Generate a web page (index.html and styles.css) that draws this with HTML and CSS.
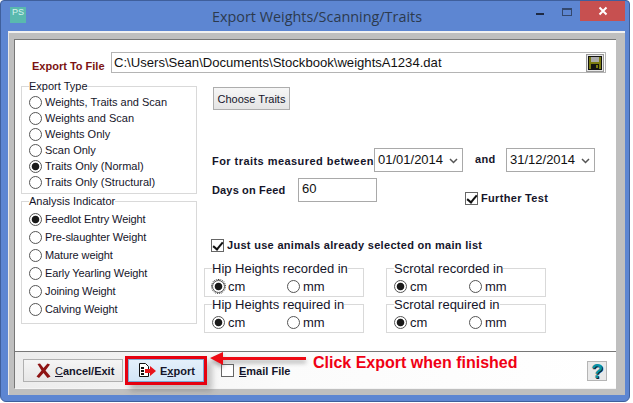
FILE: index.html
```html
<!DOCTYPE html>
<html lang="en">
<head>
<meta charset="utf-8">
<title>Export Weights/Scanning/Traits</title>
<link rel="stylesheet" href="styles.css">
</head>
<body>
<div class="window">
  <header class="titlebar">
    <div class="app-logo"><span class="app-logo-text">PS</span></div>
    <div class="title">Export Weights/Scanning/Traits</div>
    <div class="win-min"></div>
    <div class="win-max"></div>
    <div class="win-close">
      <svg width="10" height="10" viewBox="0 0 10 10"><path d="M1.5 1.5l7 7M8.500 1.500l-7 7" stroke="#fff" stroke-width="2"/></svg>
    </div>
  </header>
  <div class="frame">
    <main class="content">
      <div class="file-row">
        <label class="file-label">Export To File</label>
        <div class="file-box">
          <span class="file-path">C:\Users\Sean\Documents\Stockbook\weightsA1234.dat</span>
          <span class="save-btn">
            <svg width="14" height="14" viewBox="0 0 14 14">
              <rect width="14" height="14" fill="#111"/>
              <rect x="1" y="1" width="12" height="12" fill="#7a7a10"/>
              <rect x="3" y="1" width="8" height="5" fill="#a9a9a9"/>
              <rect x="3" y="8" width="8" height="5" fill="#111"/>
              <rect x="8" y="9" width="2" height="3" fill="#7a7a10"/>
            </svg>
          </span>
        </div>
      </div>
      <div class="columns">
        <div class="left-col">
          <fieldset class="group type-group">
            <legend>Export Type</legend>
            <label class="opt"><input type="radio" name="t">Weights, Traits and Scan</label>
            <label class="opt"><input type="radio" name="t">Weights and Scan</label>
            <label class="opt"><input type="radio" name="t">Weights Only</label>
            <label class="opt"><input type="radio" name="t">Scan Only</label>
            <label class="opt"><input type="radio" name="t" checked>Traits Only (Normal)</label>
            <label class="opt"><input type="radio" name="t">Traits Only (Structural)</label>
          </fieldset>
          <fieldset class="group analysis-group">
            <legend>Analysis Indicator</legend>
            <label class="opt"><input type="radio" name="a" checked>Feedlot Entry Weight</label>
            <label class="opt"><input type="radio" name="a">Pre-slaughter Weight</label>
            <label class="opt"><input type="radio" name="a">Mature weight</label>
            <label class="opt"><input type="radio" name="a">Early Yearling Weight</label>
            <label class="opt"><input type="radio" name="a">Joining Weight</label>
            <label class="opt"><input type="radio" name="a">Calving Weight</label>
          </fieldset>
        </div>
        <div class="right-col">
          <button class="choose-btn" type="button">Choose Traits</button>
          <div class="date-row">
            <span class="bold-label between">For traits measured between</span>
            <div class="date-box"><span>01/01/2014</span><svg class="chev" width="9" height="6" viewBox="0 0 9 6"><path d="M1 1l3.500 3.500L8 1" fill="none" stroke="#555" stroke-width="1.500"/></svg></div>
            <span class="bold-label and">and</span>
            <div class="date-box"><span>31/12/2014</span><svg class="chev" width="9" height="6" viewBox="0 0 9 6"><path d="M1 1l3.500 3.500L8 1" fill="none" stroke="#555" stroke-width="1.500"/></svg></div>
          </div>
          <div class="days-row">
            <span class="bold-label days">Days on Feed</span>
            <div class="days-box">60</div>
            <label class="check bold-label further"><input type="checkbox" checked>Further Test</label>
          </div>
          <label class="check bold-label just"><input type="checkbox" checked>Just use animals already selected on main list</label>
          <div class="units">
            <fieldset class="unit">
              <legend>Hip Heights recorded in</legend>
              <label class="unit-opt"><input class="focused" type="radio" name="u1" checked>cm</label>
              <label class="unit-opt"><input type="radio" name="u1">mm</label>
            </fieldset>
            <fieldset class="unit">
              <legend>Scrotal recorded in</legend>
              <label class="unit-opt"><input type="radio" name="u2" checked>cm</label>
              <label class="unit-opt"><input type="radio" name="u2">mm</label>
            </fieldset>
            <fieldset class="unit">
              <legend>Hip Heights required in</legend>
              <label class="unit-opt"><input type="radio" name="u3" checked>cm</label>
              <label class="unit-opt"><input type="radio" name="u3">mm</label>
            </fieldset>
            <fieldset class="unit">
              <legend>Scrotal required in</legend>
              <label class="unit-opt"><input type="radio" name="u4" checked>cm</label>
              <label class="unit-opt"><input type="radio" name="u4">mm</label>
            </fieldset>
          </div>
        </div>
      </div>
    </main>
    <footer class="footer">
      <button class="cancel-btn" type="button">
        <svg width="15" height="15" viewBox="0 0 15 15"><path d="M1.500 1L4 .5 7.500 5 11.500 .5 14 1.500 9.500 7.500 14.500 13.500 11.500 15 7.500 10 3 15 .5 13.500 5.500 7.500z" fill="#8e1414"/></svg>
        <span><u>C</u>ancel/Exit</span>
      </button>
      <button class="export-btn" type="button">
        <svg width="17" height="15" viewBox="0 0 17 15">
          <path d="M.5.500h6l3 3v10h-9z" fill="#fff" stroke="#111"/>
          <path d="M2 4h3v2H2zM2 7h3v2H2zM2 10h3v2H2z" fill="#111"/>
          <path d="M6 6h5V3l6 5-6 5v-3H6z" fill="#e8141c"/>
        </svg>
        <span>E<u>x</u>port</span>
      </button>
      <label class="email"><input type="checkbox"><span><u>E</u>mail File</span></label>
      <span class="callout">Click Export when finished</span>
      <button class="help-btn" type="button">?</button>
      <svg class="arrow" width="100" height="16" viewBox="0 0 100 16">
        <path d="M0 7l13-6v5h83v3H13v5z" fill="#ee0a14"/>
      </svg>
    </footer>
  </div>
</div>
</body>
</html>
```
FILE: styles.css
```css
* { box-sizing: border-box; }
html, body { margin: 0; padding: 0; background: #fff; }
body { width: 633px; height: 403px; overflow: hidden; font-family: "Liberation Sans", Arial, sans-serif; }

.window {
  width: 630px;
  height: 402px;
  background: #5d86d2;
  border: 1px solid #3f5f9c;
  border-radius: 4px 4px 6px 6px;
  padding: 0 4px 0 7px;
  display: flex;
  flex-direction: column;
}

.titlebar { height: 30px; display: flex; align-items: flex-start; flex: none; }
.app-logo {
  width: 16px; height: 16px; margin: 6px 0 0 2px;
  background: #59b9ae; display: flex; justify-content: center;
  flex: none;
}
.app-logo-text { color: #d8f2ee; font-size: 9px; line-height: 11px; }
.title {
  width: 0; flex: 1 1 auto;
  text-align: center; color: #2c3a4e; font-family: "Open Sans", sans-serif;
  font-size: 14.400px; line-height: 20px; margin-top: 6px; padding-left: 72px;
}
.win-min { width: 8px; height: 2px; background: #1e2a44; margin: 12px 18px 0 0; flex: none; }
.win-max { width: 10px; height: 8px; border: 1px solid #33486e; border-top-width: 2px; margin: 7px 8px 0 0; flex: none; }
.win-close {
  width: 45px; height: 20px; background: #c75050; flex: none; margin-right: 0;
  display: flex; align-items: center; justify-content: center;
}

.frame {
  height: 364px; flex: none;
  border-top: 2px solid #f1f1f1;
  border-left: 1px solid #e8e8e8;
  background: #bfbfbf;
  padding: 6px 9px 6px 5px;
  display: flex; flex-direction: column;
}

.content {
  flex: 1 1 auto; min-height: 0;
  background: #fff;
  border-top: 1px solid #777;
  border-left: 1px solid #777;
  padding: 12px 0 0 16px;
}

.file-row { display: flex; align-items: flex-start; }
.file-label { width: 80px; flex: none; color: #7b1212; font-size: 11px; font-weight: bold; letter-spacing: 0; margin-top: 8px; padding-left: 1px; }
.file-box {
  width: 495px; height: 21px; flex: none;
  border: 1px solid #b4b4b4; padding-left: 2px;
  display: flex; align-items: center; justify-content: space-between;
  font-size: 13.100px; color: #111;
}
.save-btn { width: 18px; height: 18px; border: 1px solid #999; background: #e6e6e6; display: flex; align-items: center; justify-content: center; margin-right: 1px; }

.columns { display: flex; margin-top: 6px; margin-left: -10px; }
.left-col { width: 176px; flex: none; }
.right-col { margin-left: 14px; width: 340px; flex: none; display: flex; flex-direction: column; align-items: flex-start; }

.group {
  margin: 0; padding: 0 0 0 7px; border: 1px solid #d9d9d9;
  width: 176px; min-width: 0;
}
.group legend, .unit legend { padding: 0; color: #15152a; }
.group legend { margin-left: 0; font-size: 11px; line-height: 14px; letter-spacing: 0; }
.type-group { height: 115px; padding-top: 1px; }
.analysis-group { height: 130px; margin-top: 0; }
.analysis-group .opt { height: 18px; letter-spacing: -.1px; }

.opt { display: flex; align-items: center; height: 16px; font-size: 11px; letter-spacing: 0; color: #15152a; white-space: nowrap; }
.analysis-group legend + .opt { margin-top: 2px; }

input[type="radio"] {
  appearance: none; margin: 0; width: 13px; height: 13px; flex: none;
  border: 1px solid #555; border-radius: 50%; background: #fff;
}
input[type="radio"]:checked { background: radial-gradient(circle, #1a1a1a 0 3.400px, #fff 4.200px); }
input.focused { outline: 1px dotted #333; outline-offset: 0; border-radius: 50%; }
.opt input { margin-right: 3px; }

input[type="checkbox"] {
  appearance: none; margin: 0 4px 0 0; width: 13px; height: 13px; flex: none;
  border: 1px solid #666; background: #fff;
}
input[type="checkbox"]:checked::after {
  content: "";
  display: block;
  width: 4px; height: 8px;
  margin: 0 0 0 3px;
  border: solid #111; border-width: 0 2px 2px 0;
  transform: rotate(40deg);
}

.choose-btn {
  margin-top: 8px; margin-left: 2px; width: 77px; height: 23px; padding: 0;
  border: 1px solid #adadad; background: linear-gradient(#f6f6f6, #e4e4e4);
  font: 11px "Liberation Sans", sans-serif; letter-spacing: 0; color: #15152a;
}
.bold-label { font-size: 11px; font-weight: bold; letter-spacing: .32px; color: #15152a; white-space: nowrap; }

.date-row { display: flex; align-items: center; margin: 38px 0 0 1px; height: 24px; }
.between { width: 162px; flex: none; margin-top: 1px; letter-spacing: .45px; }
.and { width: 43px; flex: none; padding-left: 12px; margin-top: -2px; }
.date-box {
  width: 89px; height: 24px; flex: none;
  border: 1px solid #a9a9a9; padding: 0 4px 1px 3px;
  display: flex; align-items: center; justify-content: space-between;
  font-size: 13px; color: #111;
}
.chev { margin-top: 3px; }

.days-row { display: flex; align-items: center; margin: 6px 0 0 1px; height: 24px; }
.days { width: 86px; flex: none; letter-spacing: .15px; }
.days-box {
  width: 79px; height: 24px; flex: none; border: 1px solid #a9a9a9;
  padding-left: 3px; font-size: 13px; line-height: 20px; color: #111;
}
.check { display: flex; align-items: center; }
.further { margin: 16px 0 0 88px; height: 14px; }
.further input { margin-right: 3px; }
.just { margin: 36px 0 0 0; height: 14px; letter-spacing: .3px; }
.just input { margin-right: 3px; }

.units { display: grid; grid-template-columns: 160px 160px; column-gap: 22px; row-gap: 0; margin: 9px 0 0 -7px; }
.unit {
  margin: 0; padding: 1px 0 0 7px; border: 1px solid #d9d9d9; min-width: 0;
  height: 36px; display: flex;
}
.unit legend { margin-left: 0; font-size: 13px; line-height: 15px; letter-spacing: 0; }
.unit-opt { display: flex; align-items: center; width: 75px; height: 18px; font-size: 13px; color: #15152a; }
.unit-opt input { margin-right: 3px; }

.footer {
  height: 38px; flex: none; position: relative;
  border-top: 1px solid #777; border-left: 1px solid #777;
  border-bottom: 1px solid #f4f4f4;
  background: linear-gradient(90deg, #ececec, #fbfbfb 45%, #fff);
  display: flex; align-items: flex-start; padding: 7px 0 0 8px;
}
.cancel-btn {
  width: 100px; height: 23px; flex: none; padding: 0 0 0 12px;
  border: 1px solid #b0b0b0; background: linear-gradient(#f5f5f5, #e6e6e6);
  display: flex; align-items: center; gap: 4px;
  font: bold 11px "Liberation Sans", sans-serif; color: #15152a; letter-spacing: 0;
}
.cancel-btn u { font-weight: normal; text-decoration-thickness: 1px; }
.export-btn {
  width: 76px; height: 23px; flex: none; margin-left: 5px; padding: 0 0 0 10px;
  border: 1px solid #7da9d4; background: linear-gradient(#e4f0fb, #d3e5f6);
  outline: 3px solid #e6000f; outline-offset: 0;
  box-shadow: 5px 6px 6px 3px rgba(90, 90, 90, .35);
  display: flex; align-items: center; gap: 4px;
  font: bold 11px "Liberation Sans", sans-serif; color: #15152a; letter-spacing: 0;
}
.email {
  display: flex; align-items: center; margin: 5px 0 0 17px; flex: none; width: 92px;
  font: bold 11px "Liberation Sans", sans-serif; color: #15152a; letter-spacing: 0;
}
.email input { margin-right: 5px; }
.callout { color: #f00014; font-size: 16px; font-weight: bold; white-space: nowrap; margin-top: 0; width: 274px; flex: none; transform: translateY(-5px); }
.help-btn {
  width: 20px; height: 20px; padding: 0; flex: none; margin-top: 2px;
  border: 1px solid #b5b5b5; background: #e9e9e9;
  font: bold 20px/18px "Liberation Sans", sans-serif; color: #0a93a8;
  text-shadow: 1px 1px 0 #123;
}
.arrow { position: absolute; left: 195px; top: -1px; filter: drop-shadow(0 3px 2px rgba(90, 90, 90, .5)); }
```
